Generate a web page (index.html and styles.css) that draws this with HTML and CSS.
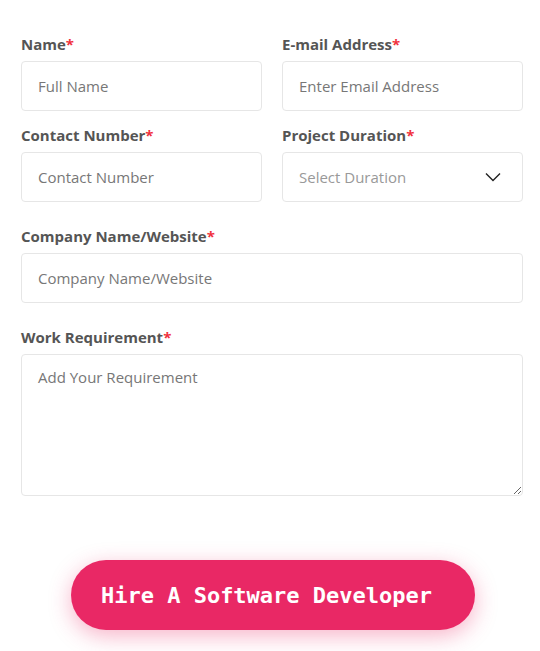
FILE: index.html
```html
<!DOCTYPE html>
<html lang="en">
<head>
  <meta charset="UTF-8">
  <meta name="viewport" content="width=device-width, initial-scale=1.0">
  <title>Hire A Software Developer</title>
  <link rel="stylesheet" href="styles.css">
</head>
<body>
  <form class="hire-form">
    <div class="row two">
      <div class="field">
        <label>Name<span class="req">*</span></label>
        <input type="text" placeholder="Full Name">
      </div>
      <div class="field">
        <label>E-mail Address<span class="req">*</span></label>
        <input type="email" placeholder="Enter Email Address">
      </div>
    </div>

    <div class="row two">
      <div class="field">
        <label>Contact Number<span class="req">*</span></label>
        <input type="text" placeholder="Contact Number">
      </div>
      <div class="field">
        <label>Project Duration<span class="req">*</span></label>
        <div class="select">
          <span class="select-text">Select Duration</span>
          <svg class="chevron" width="16" height="10" viewBox="0 0 16 10" fill="none">
            <path d="M1 1.5 L8 8.5 L15 1.5" stroke="#222" stroke-width="1.4"/>
          </svg>
        </div>
      </div>
    </div>

    <div class="row">
      <div class="field">
        <label>Company Name/Website<span class="req">*</span></label>
        <input type="text" placeholder="Company Name/Website">
      </div>
    </div>

    <div class="row">
      <div class="field">
        <label>Work Requirement<span class="req">*</span></label>
        <textarea placeholder="Add Your Requirement"></textarea>
      </div>
    </div>

    <div class="actions">
      <button type="button" class="hire-btn">Hire A Software Developer</button>
    </div>
  </form>
</body>
</html>
```

FILE: styles.css
```css
* {
  margin: 0;
  padding: 0;
  box-sizing: border-box;
}

body {
  font-family: 'Open Sans', 'Noto Sans', sans-serif;
  background: #fff;
  color: #555;
}

.hire-form {
  padding: 34px 17px 30px 21px;
}

.row {
  margin-bottom: 24px;
}

.row.two {
  display: grid;
  grid-template-columns: 1fr 1fr;
  gap: 20px;
}

.row:first-child {
  margin-bottom: 14px;
}

.field label {
  display: block;
  font-size: 15px;
  font-weight: 700;
  line-height: 20px;
  margin-bottom: 7px;
  color: #555;
}

.req {
  color: #f0313d;
}

input,
textarea,
.select {
  width: 100%;
  height: 50px;
  border: 1px solid #e6e6e6;
  border-radius: 4px;
  padding: 0 16px;
  font-family: inherit;
  font-size: 15px;
  color: #555;
  outline: none;
  background: #fff;
}

input::placeholder,
textarea::placeholder {
  color: #777;
}

.select {
  display: flex;
  align-items: center;
  justify-content: space-between;
  padding-right: 21px;
}

.select-text {
  color: #999;
}

textarea {
  height: 142px;
  padding: 12px 16px;
  resize: vertical;
  display: block;
}

.actions {
  display: flex;
  justify-content: center;
  padding-top: 40px;
  padding-left: 2px;
}

.hire-btn {
  width: 404px;
  height: 70px;
  border: none;
  border-radius: 35px;
  padding-right: 13px;
  background: #e92865;
  color: #fff;
  font-family: 'DejaVu Sans Mono', monospace;
  font-size: 22px;
  font-weight: 700;
  box-shadow: 0 6px 22px rgba(233, 40, 101, 0.35);
  cursor: pointer;
}
```
